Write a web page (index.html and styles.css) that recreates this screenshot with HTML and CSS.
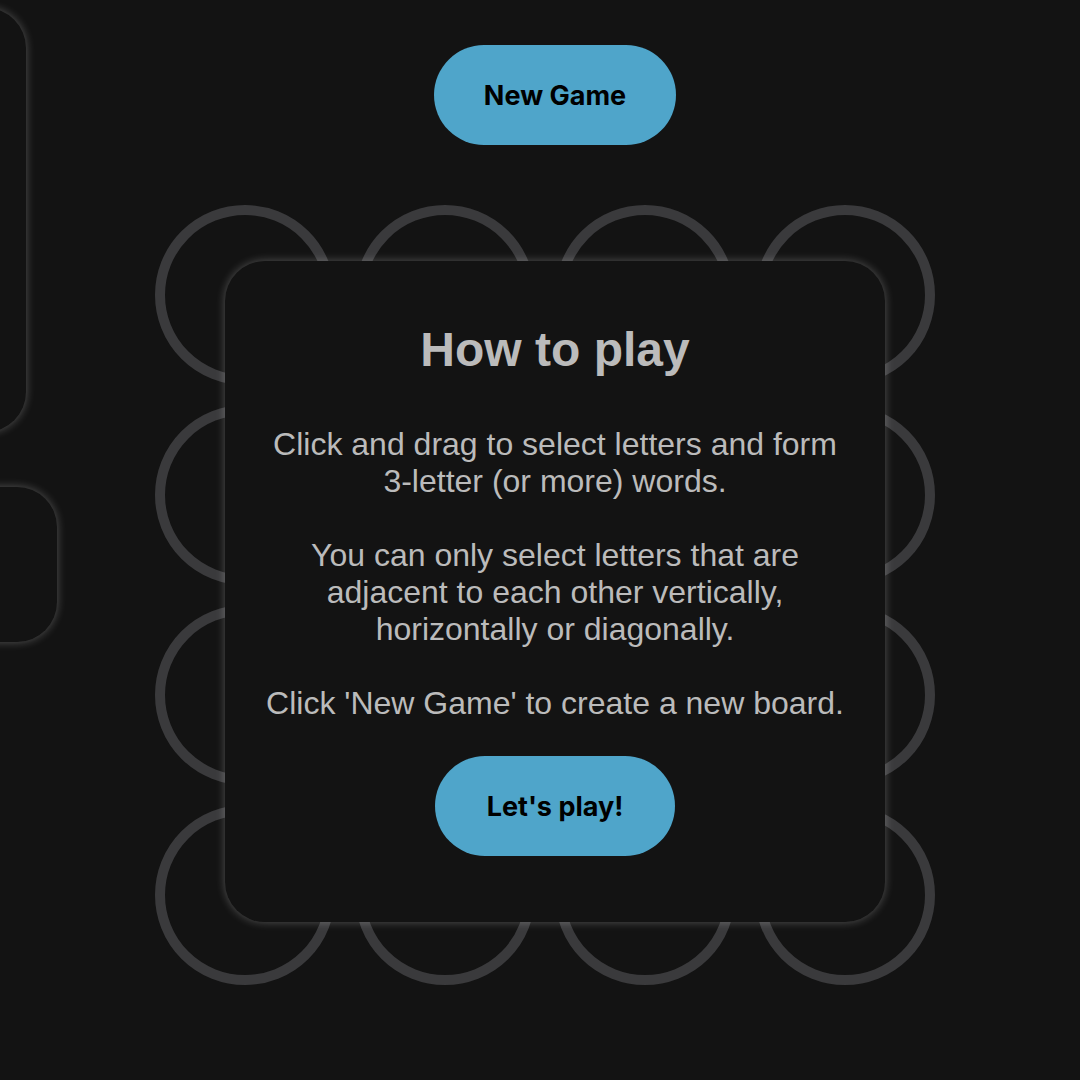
FILE: index.html
```html
<!DOCTYPE html>
<html lang="en">
<head>
<meta charset="utf-8">
<title>Word Game</title>
<link rel="stylesheet" href="styles.css">
</head>
<body>
<div class="page">
  <aside class="side">
    <div class="panel panel-a"></div>
    <div class="panel panel-b"></div>
  </aside>
  <main class="main">
    <button class="btn">New Game</button>
    <div class="board-wrap">
      <div class="board">
        <div class="cell"></div><div class="cell"></div><div class="cell"></div><div class="cell"></div>
        <div class="cell"></div><div class="cell"></div><div class="cell"></div><div class="cell"></div>
        <div class="cell"></div><div class="cell"></div><div class="cell"></div><div class="cell"></div>
        <div class="cell"></div><div class="cell"></div><div class="cell"></div><div class="cell"></div>
      </div>
      <div class="modal">
        <h2 class="modal-title">How to play</h2>
        <div class="modal-text">
          <p>Click and drag to select letters and form 3-letter (or more) words.</p>
          <p>You can only select letters that are adjacent to each other vertically, horizontally or diagonally.</p>
          <p>Click 'New Game' to create a new board.</p>
        </div>
        <button class="btn btn-play">Let's play!</button>
      </div>
    </div>
  </main>
</div>
</body>
</html>
```

FILE: styles.css
```css
html, body {
  margin: 0;
  padding: 0;
  background: #131313;
  overflow: hidden;
}

.page {
  display: flex;
  width: 1080px;
  height: 1080px;
}

.side {
  flex: 0 0 30px;
  min-width: 0;
  display: flex;
  flex-direction: column;
  gap: 55px;
  padding-top: 8px;
}

.panel {
  flex: none;
  background: #131313;
  border-radius: 40px;
  box-shadow: 0 0 10px rgba(255, 255, 255, 0.28);
}

.panel-a {
  width: 356px;
  height: 424px;
  margin-left: -330px;
}

.panel-b {
  width: 387px;
  height: 155px;
  margin-left: -330px;
}

.main {
  flex: 1;
  min-width: 0;
  display: flex;
  flex-direction: column;
  align-items: center;
  padding-top: 45px;
  gap: 60px;
}

.btn {
  flex: none;
  height: 100px;
  min-width: 240px;
  padding: 0 50px;
  border: none;
  border-radius: 50px;
  background: #4fa5ca;
  color: #000;
  font-family: Inter, "Liberation Sans", sans-serif;
  font-weight: 700;
  font-size: 27px;
  cursor: pointer;
}

.board-wrap {
  position: relative;
  width: 800px;
}

.board {
  display: grid;
  grid-template-columns: repeat(4, 180px);
  gap: 20px;
}

.cell {
  width: 180px;
  height: 180px;
  box-sizing: border-box;
  border: 10px solid #3a3a3c;
  border-radius: 50%;
}

.modal {
  position: absolute;
  top: 56px;
  left: 70px;
  width: 660px;
  box-sizing: border-box;
  padding: 61px 40px 66px;
  background: #131313;
  border-radius: 40px;
  box-shadow: 0 0 10px rgba(255, 255, 255, 0.28);
  text-align: center;
  color: #bbbbbb;
  font-family: "Liberation Sans", Arial, sans-serif;
  display: flex;
  flex-direction: column;
  align-items: center;
}

.modal-title {
  margin: 0;
  font-size: 48px;
  font-weight: 700;
  line-height: normal;
}

.modal-text {
  margin-top: 49px;
  font-size: 32px;
  line-height: normal;
}

.modal-text p {
  margin: 0;
}

.modal-text p + p {
  margin-top: 37px;
}

.btn-play {
  margin-top: 34px;
}
```
